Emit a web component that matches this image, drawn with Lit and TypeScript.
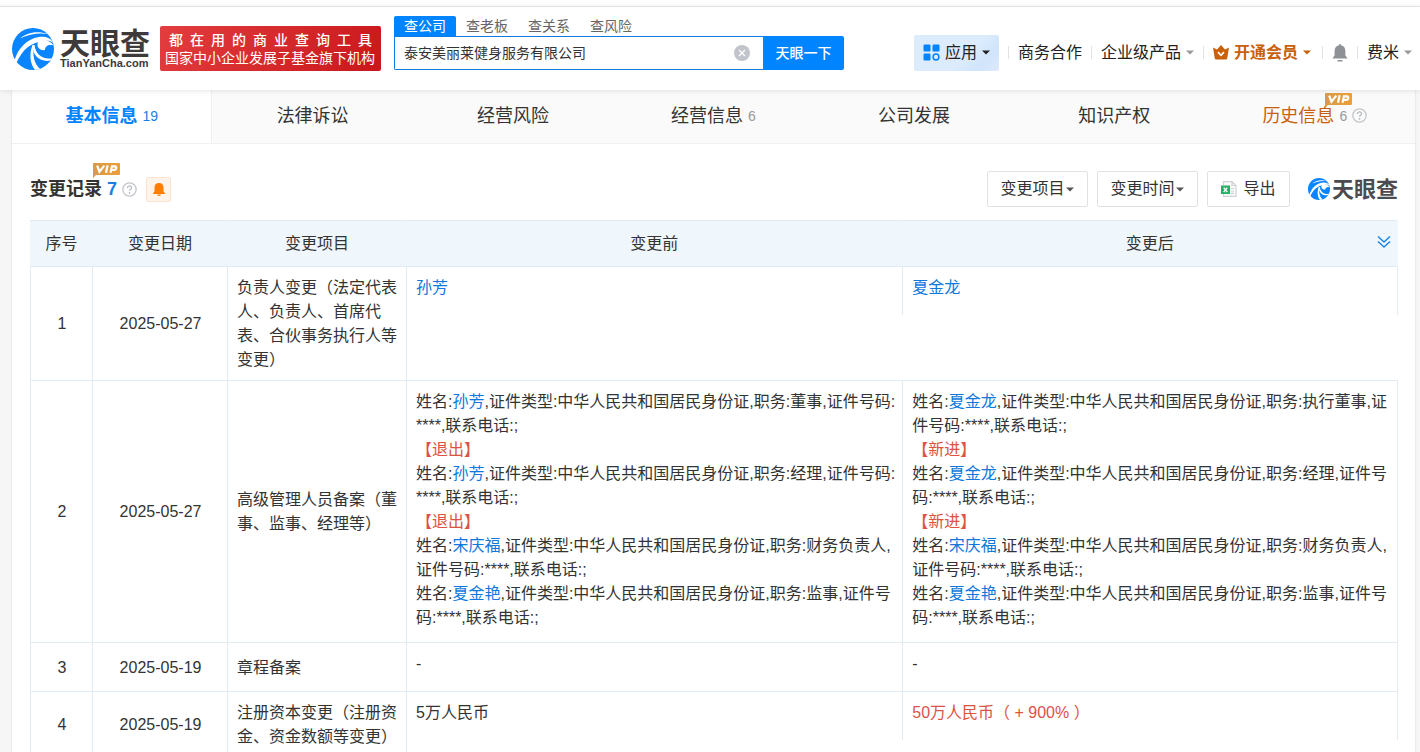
import { LitElement, html, svg, css, nothing } from "lit";
import { customElement } from "lit/decorators.js";

const swirl = svg`
  <circle cx="21" cy="21" r="21" fill="#0a84ff"/>
  <path d="M8 10.5C14 5 25 2 36 6.2C26 4.6 18 6.4 8 10.5Z" fill="#fff"/>
  <path d="M2.6 32C6 21 14 11 27 9C33 8.2 39 10 41.5 15C38 12 34 12.4 31 13.4C19 14 10 22 4.6 34.6Z" fill="#fff"/>
  <path d="M20.5 17C17 26 18 36 23 42L28 41C21.5 35 20.5 26 22 17Z" fill="#fff"/>
  <path d="M20.6 17.5C20 27 28 34.5 38.4 32.6L39.8 30.2C30 31.6 23.4 26 22.6 17Z" fill="#fff"/>
  <path d="M26 14C31 11 38 12 41.8 17.5C37 16 33 18 33 22C28 23 24 19 26 14Z" fill="#fff"/>
`;

const caret = html`<svg class="caret" viewBox="0 0 8 5" width="8" height="5" aria-hidden="true"><path d="M0 0.5H8L4 4.5Z" fill="currentColor"/></svg>`;

const help = html`<svg class="help" viewBox="0 0 16 16" width="15" height="15" role="img" aria-label="说明">
  <circle cx="8" cy="8" r="7.1" fill="none" stroke="#c3c6ca" stroke-width="1.4"/>
  <path d="M5.8 6.3C5.8 3.4 10.3 3.5 10.2 6.2C10.2 7.7 8 7.8 8 9.4" fill="none" stroke="#b5b9be" stroke-width="1.3"/>
  <circle cx="8" cy="11.6" r="0.9" fill="#b5b9be"/>
</svg>`;

const vip = html`<svg class="vip" viewBox="0 0 27 15" width="27" height="15" role="img" aria-label="VIP">
  <defs><linearGradient id="g" x1="0" x2="1"><stop offset="0" stop-color="#d89a4a"/><stop offset="1" stop-color="#ec9f38"/></linearGradient></defs>
  <path d="M1 0H26Q27 0 27 1V11Q27 12 26 12H3L0 15V1Q0 0 1 0Z" fill="url(#g)"/>
  <path d="M4.2 2.6L6.4 8.8L11.3 2.6M14.6 2.2L13 9.8M17.5 9.8L19 3.4H22C24.2 3.4 23.4 7 21 7H18.5" fill="none" stroke="#fff" stroke-width="2.2"/>
</svg>`;

type Part = { t: string; k?: "link" | "red" };
type Line = Part[];
type Row = { date: string; item: string; before: Line[]; after: Line[] };

const person = (name: string, job: string): Line => [
  { t: "姓名:" },
  { t: name, k: "link" },
  { t: `,证件类型:中华人民共和国居民身份证,职务:${job},证件号码:****,联系电话:;` },
];
const tag = (t: string): Line => [{ t, k: "red" }];

const rows: Row[] = [
  {
    date: "2025-05-27",
    item: "负责人变更（法定代表人、负责人、首席代表、合伙事务执行人等变更）",
    before: [[{ t: "孙芳", k: "link" }]],
    after: [[{ t: "夏金龙", k: "link" }]],
  },
  {
    date: "2025-05-27",
    item: "高级管理人员备案（董事、监事、经理等）",
    before: [person("孙芳", "董事"), tag("【退出】"), person("孙芳", "经理"), tag("【退出】"), person("宋庆福", "财务负责人"), person("夏金艳", "监事")],
    after: [person("夏金龙", "执行董事"), tag("【新进】"), person("夏金龙", "经理"), tag("【新进】"), person("宋庆福", "财务负责人"), person("夏金艳", "监事")],
  },
  { date: "2025-05-19", item: "章程备案", before: [[{ t: "-" }]], after: [[{ t: "-" }]] },
  {
    date: "2025-05-19",
    item: "注册资本变更（注册资金、资金数额等变更）",
    before: [[{ t: "5万人民币" }]],
    after: [[{ t: "50万人民币（ + 900% ）", k: "red" }]],
  },
];

const tabs: { name: string; count?: number; on?: boolean; vip?: boolean }[] = [
  { name: "基本信息", count: 19, on: true },
  { name: "法律诉讼" },
  { name: "经营风险" },
  { name: "经营信息", count: 6 },
  { name: "公司发展" },
  { name: "知识产权" },
  { name: "历史信息", count: 6, vip: true },
];

@customElement("app-root")
export class AppRoot extends LitElement {
  static styles = css`
    :host {
      display: block;
      height: 100vh;
      overflow: hidden;
      background: #f6f6f7;
      color: #333;
      font: 16px/24px "Liberation Sans", "Noto Sans CJK SC", sans-serif;
    }
    * { box-sizing: border-box; }
    a { color: inherit; text-decoration: none; }
    button { font: inherit; color: inherit; margin: 0; padding: 0; border: 0; background: none; cursor: pointer; }
    svg { display: block; flex: none; }

    .gap { height: 6px; background: #fff; }
    .top {
      position: relative;
      display: flex;
      align-items: center;
      height: 84px;
      padding: 0 8px 0 12px;
      border-top: 1px solid #e2e2e2;
      background: #fff;
      box-shadow: 0 1px 5px rgba(0, 0, 0, 0.1);
    }
    .brand { display: flex; align-items: center; gap: 6px; }
    .words { display: flex; flex-direction: column; gap: 4px; width: 90px; color: #3e3a39; white-space: nowrap; }
    .cn { font: 700 30px/24px "Noto Sans CJK SC", sans-serif; }
    .en { font: 700 11px/12px "Liberation Sans", sans-serif; }
    .slogan {
      display: flex;
      flex-direction: column;
      justify-content: center;
      width: 221px;
      height: 45px;
      margin-left: 10px;
      padding: 0 5px;
      border-radius: 2px;
      background: linear-gradient(120deg, #e33d3f, #c9171b);
      color: #fff;
      font-size: 14px;
      line-height: 18px;
      white-space: nowrap;
    }
    .spread { display: flex; justify-content: space-between; padding: 0 4px; font-weight: 500; }
    .search { width: 450px; margin-left: 13px; align-self: flex-start; padding-top: 9px; }
    .kinds { display: flex; height: 20px; font-size: 14px; line-height: 20px; color: #666; }
    .kinds button { width: 62px; }
    .kinds .on { background: #0084ff; color: #fff; border-radius: 2px 2px 0 0; }
    .box { display: flex; height: 34px; }
    .field { display: flex; flex: 1; min-width: 0; align-items: center; border: 1px solid #0d7be0; border-right: 0; border-radius: 0 0 0 2px; padding-right: 13px; }
    .field input { flex: 1; min-width: 0; border: 0; outline: 0; background: none; padding: 0 9px; font: inherit; font-size: 14px; color: #333; }
    .go { width: 81px; background: #0084ff; color: #fff; font-size: 14px; font-weight: 500; border-radius: 0 2px 2px 0; }

    .nav { display: flex; align-items: center; margin-left: auto; padding-top: 8px; white-space: nowrap; color: #222; }
    .nav > * + * { margin-left: 9px; }
    .nav a, .nav button { display: flex; align-items: center; gap: 5px; }
    .nav .apps { width: 85px; height: 36px; padding: 0 9px; gap: 5px; border-radius: 2px; background: linear-gradient(135deg, #dcecfd 60%, #d0e4fb 80%, #dfeafc); }
    .nav .sep { width: 1px; height: 13px; background: #e3e3e3; }
    .nav .member { padding-right: 2px; color: #c9600c; font-weight: 700; }
    .soft .caret { color: #999; }

    .panel { margin: 0 5px 0 12px; background: #fff; min-height: calc(100vh - 90px); box-shadow: 0 0 2px rgba(0, 0, 0, 0.12); }
    .tabs { display: grid; grid-template-columns: repeat(7, 1fr); height: 54px; background: #fafafa; border-bottom: 1px solid #f0f0f0; }
    .tab { display: flex; align-items: center; justify-content: center; gap: 5px; padding-bottom: 2px; font-size: 18px; }
    .tab.on { background: #fff; color: #0084ff; border-right: 1px solid #f0f0f0; }
    .tab.on .name { font-weight: 700; }
    .tab.gold { color: #c9600c; }
    .count { font-size: 14px; color: #999; }
    .on .count { color: #1a7fe0; }
    .anchor { position: relative; }
    .anchor .vip { position: absolute; left: 63px; top: -11px; }
    h2.anchor .vip { top: -14px; }

    .section { padding: 27px 17px 0 18px; }
    .bar { display: flex; align-items: center; height: 36px; margin-bottom: 13px; }
    h2 { margin: 0; font-size: 18px; line-height: 24px; font-weight: 700; white-space: nowrap; }
    .total { margin: 0 5px; font-size: 18px; font-weight: 700; color: #1a7fe0; }
    .bell { display: grid; place-items: center; width: 25px; height: 25px; margin-left: 9px; border: 1px solid #fbe3cf; border-radius: 2px; background: #fff4ea; }
    .tools { display: flex; align-items: center; gap: 9px; margin-left: auto; }
    .tool { display: flex; align-items: center; justify-content: center; gap: 2px; width: 101px; height: 36px; border: 1px solid #dfe3e6; border-radius: 2px; }
    .tool .caret { color: #555; }
    .tool.export { width: 83px; gap: 6px; }
    .mark { display: flex; align-items: center; gap: 2px; margin-left: 9px; font: 700 22px/22px "Noto Sans CJK SC", sans-serif; color: #4b4c50; }
    .mark span { padding-bottom: 5px; }

    table { width: 100%; border-collapse: collapse; table-layout: fixed; }
    th, td { border: 1px solid #e1ebf2; padding: 9px 8px 8px 9px; }
    th { position: relative; height: 46px; padding: 0; background: #eff6fc; border-left-color: #eff6fc; border-right-color: #eff6fc; font-weight: 400; }
    td.mid { text-align: center; }
    td.diff { padding: 0; height: 49px; vertical-align: top; border-right: 0; }
    .c1 { width: 62px; }
    .c2 { width: 135px; }
    .c3 { width: 179px; }
    .pair { display: grid; grid-template-columns: 1fr 1fr; }
    .half { min-height: 48px; padding: 9px 4px 12px 9px; word-break: break-all; }
    .half + .half { border-left: 1px solid #e1ebf2; border-right: 1px solid #e1ebf2; }
    .link { color: #0e78dd; }
    .red { color: #dc5244; }
    .expand { position: absolute; right: 6px; top: 14px; }
  `;

  private lines(lines: Line[]) {
    return lines.map(
      (line) => html`<div>${line.map((p) =>
        p.k === "link" ? html`<a class="link" href="#">${p.t}</a>` : p.k ? html`<span class=${p.k}>${p.t}</span>` : p.t
      )}</div>`
    );
  }

  render() {
    return html`
      <div class="gap"></div>
      <header class="top">
        <a class="brand" href="#" aria-label="天眼查">
          <svg viewBox="0 0 42 42" width="42" height="42" aria-hidden="true">${swirl}</svg>
          <span class="words"><span class="cn">天眼查</span><span class="en">TianYanCha.com</span></span>
        </a>
        <div class="slogan">
          <div class="spread">${[..."都在用的商业查询工具"].map((c) => html`<span>${c}</span>`)}</div>
          <div>国家中小企业发展子基金旗下机构</div>
        </div>
        <form class="search" @submit=${(e: Event) => e.preventDefault()}>
          <div class="kinds">
            <button type="button" class="on">查公司</button><button type="button">查老板</button><button type="button">查关系</button><button type="button">查风险</button>
          </div>
          <div class="box">
            <div class="field">
              <input type="text" aria-label="公司名称" .value=${"泰安美丽莱健身服务有限公司"} />
              <button type="button" aria-label="清除">
                <svg viewBox="0 0 16 16" width="16" height="16"><circle cx="8" cy="8" r="8" fill="#c1c4ca"/><path d="M5 5L11 11M11 5L5 11" stroke="#fff" stroke-width="1.3"/></svg>
              </button>
            </div>
            <button class="go" type="submit">天眼一下</button>
          </div>
        </form>
        <nav class="nav">
          <button class="apps">
            <svg viewBox="0 0 17 17" width="17" height="17" aria-hidden="true"><g fill="#0084ff"><rect x="0.5" y="0.5" width="7" height="7" rx="1.2"/><rect x="9.5" y="0.5" width="7" height="7" rx="1.2"/><rect x="0.5" y="9.5" width="7" height="7" rx="1.2"/></g><circle cx="13" cy="13" r="2.9" fill="none" stroke="#0084ff" stroke-width="1.5"/></svg>
            应用${caret}
          </button>
          <span class="sep"></span>
          <a href="#">商务合作</a>
          <span class="sep"></span>
          <button class="soft">企业级产品${caret}</button>
          <span class="sep"></span>
          <button class="member">
            <svg viewBox="0 0 16 15" width="16" height="15" aria-hidden="true"><path d="M0 2.5L4 4.5L8 0L12 4.5L16 2.5L14.3 13Q14 14.5 12.8 14.5H3.2Q2 14.5 1.7 13Z" fill="#c9600c"/><path d="M5 7.2L8 10.3L11 7.2" fill="none" stroke="#fff" stroke-width="1.7"/></svg>
            开通会员${caret}
          </button>
          <span class="sep"></span>
          <button aria-label="消息">
            <svg viewBox="0 0 16 18" width="16" height="18"><path d="M8 0Q9 0 9 1.2C12 1.8 13.4 4 13.4 7V11.5L15.6 14.6H0.4L2.6 11.5V7C2.6 4 4 1.8 7 1.2Q7 0 8 0ZM5.5 16H10.5V17.5H5.5Z" fill="#8e9196"/></svg>
          </button>
          <span class="sep"></span>
          <button class="soft">费米${caret}</button>
        </nav>
      </header>
      <main class="panel">
        <nav class="tabs">
          ${tabs.map((t) => html`
            <a href="#" class="tab ${t.on ? "on" : ""} ${t.vip ? "gold" : ""}">
              <span class="name anchor">${t.name}${t.vip ? vip : nothing}</span>
              ${t.count ? html`<span class="count">${t.count}</span>` : nothing}
              ${t.vip ? help : nothing}
            </a>`)}
        </nav>
        <section class="section">
          <div class="bar">
            <h2 class="anchor">变更记录${vip}</h2>
            <span class="total">7</span>
            ${help}
            <button class="bell" aria-label="订阅提醒">
              <svg viewBox="0 0 12 13" width="12" height="13"><path d="M6 0C9 0 10.5 2 10.5 4.8V8.6L12 10.2V11H0V10.2L1.5 8.6V4.8C1.5 2 3 0 6 0ZM4 11.5H8Q7.5 13 6 13T4 11.5Z" fill="#ff7d00"/></svg>
            </button>
            <div class="tools">
              <button class="tool">变更项目${caret}</button>
              <button class="tool">变更时间${caret}</button>
              <button class="tool export">
                <svg viewBox="0 0 16 16" width="16" height="16" aria-hidden="true"><path d="M2.5 4V0.7H11L15 4.5V15.3H2.5V13" fill="#fafafa" stroke="#cfd2d6" stroke-width="1.2"/><path d="M11 0.7V4.5H15M10 7.5H13M10 10H13M10 12.3H13" fill="none" stroke="#cfd2d6" stroke-width="1.2"/><rect y="4.5" width="9" height="8.5" fill="#22b066"/><path d="M2.7 6.6L6.3 11M6.3 6.6L2.7 11" stroke="#fff" stroke-width="1.3"/></svg>
                导出
              </button>
              <span class="mark"><svg viewBox="0 0 42 42" width="22" height="22" aria-hidden="true">${swirl}</svg><span>天眼查</span></span>
            </div>
          </div>
          <table>
            <colgroup><col class="c1" /><col class="c2" /><col class="c3" /><col /><col /></colgroup>
            <thead>
              <tr>
                <th>序号</th><th>变更日期</th><th>变更项目</th><th>变更前</th>
                <th>变更后
                  <button class="expand" aria-label="展开">
                    <svg viewBox="0 0 14 14" width="14" height="14"><path d="M1 1.5L7 7L13 1.5M1 6.5L7 12L13 6.5" fill="none" stroke="#1a84f0" stroke-width="1.5"/></svg>
                  </button>
                </th>
              </tr>
            </thead>
            <tbody>
              ${rows.map((r, i) => html`
                <tr>
                  <td class="mid">${i + 1}</td>
                  <td class="mid">${r.date}</td>
                  <td>${r.item}</td>
                  <td class="diff" colspan="2">
                    <div class="pair"><div class="half">${this.lines(r.before)}</div><div class="half">${this.lines(r.after)}</div></div>
                  </td>
                </tr>`)}
            </tbody>
          </table>
        </section>
      </main>
    `;
  }
}
